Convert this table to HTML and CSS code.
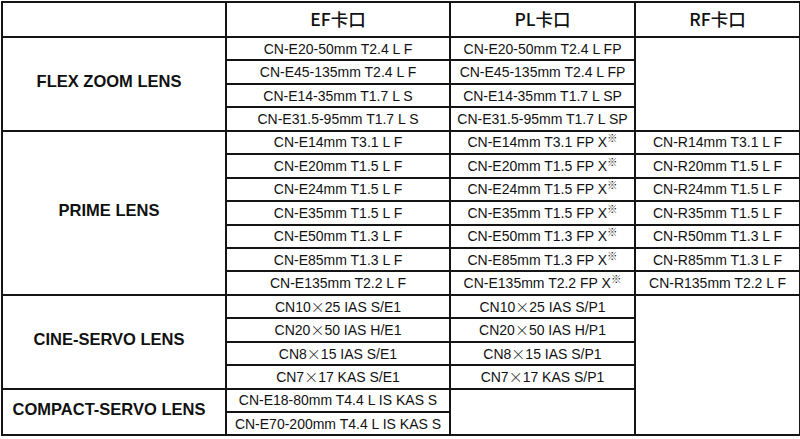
FILE: index.html
```html
<!DOCTYPE html>
<html lang="zh">
<head>
<meta charset="utf-8">
<link rel="stylesheet" href="styles.css">
</head>
<body>
<table class="lens-table">
  <colgroup>
    <col class="c-cat">
    <col class="c-ef">
    <col class="c-pl">
    <col class="c-rf">
  </colgroup>
  <thead>
    <tr class="head-row">
      <th></th>
      <th>EF卡口</th>
      <th>PL卡口</th>
      <th>RF卡口</th>
    </tr>
  </thead>
  <tbody>
    <tr>
      <td class="cat" rowspan="4">FLEX ZOOM LENS</td>
      <td>CN-E20-50mm T2.4 L F</td>
      <td>CN-E20-50mm T2.4 L FP</td>
      <td rowspan="4"></td>
    </tr>
    <tr><td>CN-E45-135mm T2.4 L F</td><td>CN-E45-135mm T2.4 L FP</td></tr>
    <tr><td>CN-E14-35mm T1.7 L S</td><td>CN-E14-35mm T1.7 L SP</td></tr>
    <tr><td>CN-E31.5-95mm T1.7 L S</td><td>CN-E31.5-95mm T1.7 L SP</td></tr>

    <tr>
      <td class="cat" rowspan="7">PRIME LENS</td>
      <td>CN-E14mm T3.1 L F</td>
      <td>CN-E14mm T3.1 FP X<sup class="mark">※</sup></td>
      <td>CN-R14mm T3.1 L F</td>
    </tr>
    <tr><td>CN-E20mm T1.5 L F</td><td>CN-E20mm T1.5 FP X<sup class="mark">※</sup></td><td>CN-R20mm T1.5 L F</td></tr>
    <tr><td>CN-E24mm T1.5 L F</td><td>CN-E24mm T1.5 FP X<sup class="mark">※</sup></td><td>CN-R24mm T1.5 L F</td></tr>
    <tr><td>CN-E35mm T1.5 L F</td><td>CN-E35mm T1.5 FP X<sup class="mark">※</sup></td><td>CN-R35mm T1.5 L F</td></tr>
    <tr><td>CN-E50mm T1.3 L F</td><td>CN-E50mm T1.3 FP X<sup class="mark">※</sup></td><td>CN-R50mm T1.3 L F</td></tr>
    <tr><td>CN-E85mm T1.3 L F</td><td>CN-E85mm T1.3 FP X<sup class="mark">※</sup></td><td>CN-R85mm T1.3 L F</td></tr>
    <tr><td>CN-E135mm T2.2 L F</td><td>CN-E135mm T2.2 FP X<sup class="mark">※</sup></td><td>CN-R135mm T2.2 L F</td></tr>

    <tr>
      <td class="cat" rowspan="4">CINE-SERVO LENS</td>
      <td>CN10<span class="times">×</span>25 IAS S/E1</td>
      <td>CN10<span class="times">×</span>25 IAS S/P1</td>
      <td rowspan="6"></td>
    </tr>
    <tr><td>CN20<span class="times">×</span>50 IAS H/E1</td><td>CN20<span class="times">×</span>50 IAS H/P1</td></tr>
    <tr><td>CN8<span class="times">×</span>15 IAS S/E1</td><td>CN8<span class="times">×</span>15 IAS S/P1</td></tr>
    <tr><td>CN7<span class="times">×</span>17 KAS S/E1</td><td>CN7<span class="times">×</span>17 KAS S/P1</td></tr>

    <tr>
      <td class="cat" rowspan="2">COMPACT-SERVO LENS</td>
      <td>CN-E18-80mm T4.4 L IS KAS S</td>
      <td rowspan="2"></td>
    </tr>
    <tr><td>CN-E70-200mm T4.4 L IS KAS S</td></tr>
  </tbody>
</table>
</body>
</html>
```

FILE: styles.css
```css
html, body {
  margin: 0;
  padding: 0;
  background: #ffffff;
}

body {
  padding-top: 1px;
  font-family: "Liberation Sans", Arial, "Noto Sans CJK SC", sans-serif;
  color: #111111;
}

.lens-table {
  border-collapse: collapse;
  table-layout: fixed;
  width: 798px;
  margin-left: 1px;
}

.c-cat { width: 224px; }
.c-ef { width: 224px; }
.c-pl { width: 185px; }
.c-rf { width: 165px; }

.lens-table th,
.lens-table td {
  border: 2px solid #151515;
  padding: 0;
  text-align: center;
  vertical-align: middle;
  white-space: nowrap;
  font-size: 14px;
  line-height: 16px;
}

.head-row th {
  height: 31px;
  padding-bottom: 2px;
  font-family: "Noto Sans CJK SC", "Liberation Sans", sans-serif;
  font-size: 17.5px;
  font-weight: 500;
  color: #111111;
}

.lens-table tbody tr {
  height: 23.45px;
}

.lens-table td.cat {
  font-weight: bold;
  font-size: 16.5px;
  padding-right: 10px;
  padding-bottom: 6px;
}

.times {
  font-family: "Noto Sans CJK SC", sans-serif;
  font-size: 14px;
  font-weight: 300;
}

.mark {
  font-family: "Noto Sans CJK SC", sans-serif;
  font-size: 10.5px;
  font-weight: bold;
  color: #222222;
  line-height: 0;
  vertical-align: 5px;
  margin-left: 0;
}
```
